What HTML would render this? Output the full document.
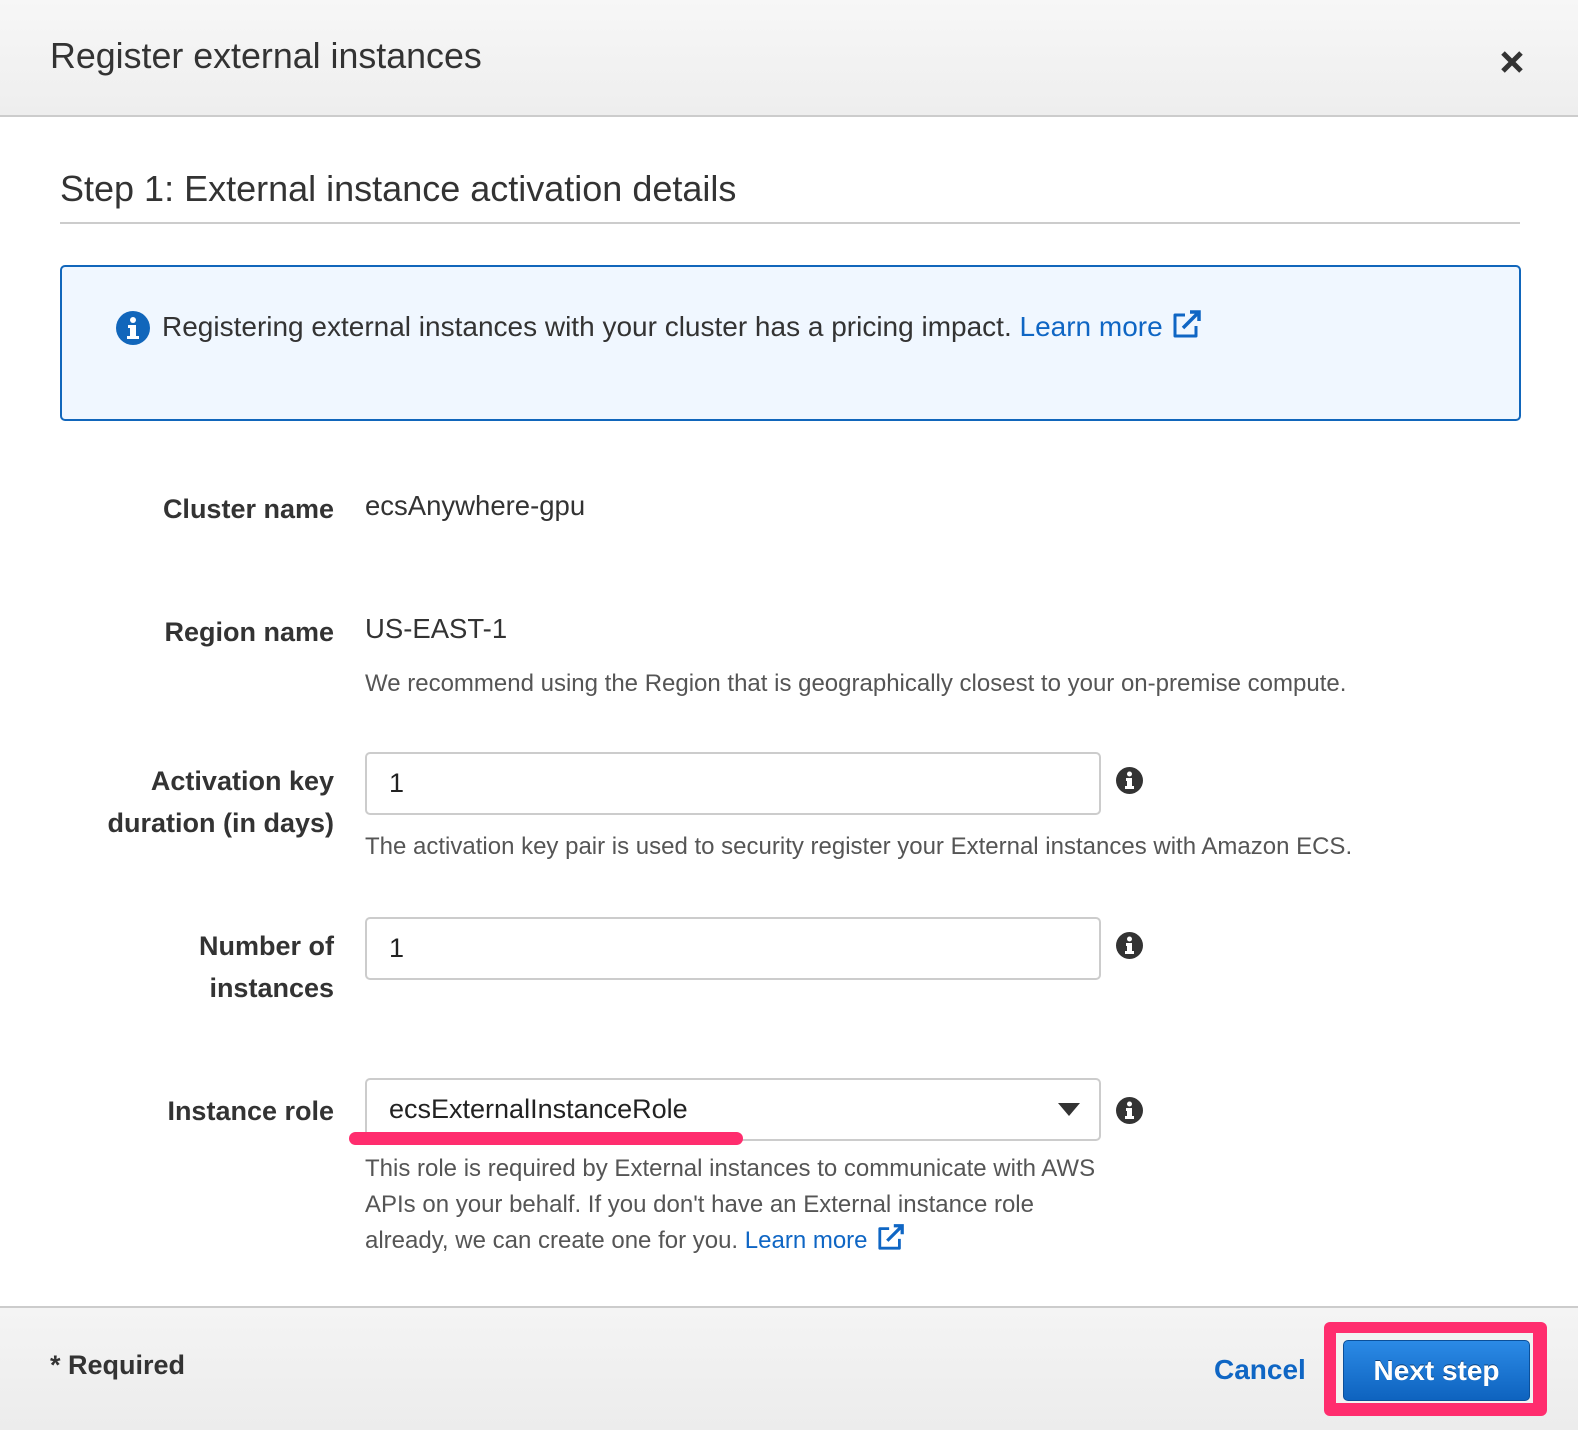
<!DOCTYPE html>
<html><head><meta charset="utf-8"><style>
*{margin:0;padding:0;box-sizing:border-box}
body{width:1578px;height:1430px;position:relative;background:#fff;font-family:"Liberation Sans",Arial,sans-serif;color:#333;overflow:hidden}
.a{position:absolute;white-space:nowrap}
.hdr{position:absolute;left:0;top:0;width:1578px;height:117px;background:linear-gradient(#f7f7f7,#eeeeee);border-bottom:2px solid #ccc}
.ftr{position:absolute;left:0;top:1306px;width:1578px;height:124px;background:linear-gradient(#f4f4f4,#ececec);border-top:2px solid #ccc}
.lbl{position:absolute;right:1244px;font-weight:bold;font-size:27px;text-align:right;line-height:42px;color:#333}
.inp{position:absolute;left:365px;width:736px;height:63px;border:2px solid #ccc;border-radius:5px;font-size:27px;padding-left:22px;line-height:59px;color:#222}
.help{position:absolute;left:365px;font-size:24px;color:#555;line-height:36px}
a{color:#0f66c4;text-decoration:none}
.ii{position:absolute;left:1116px;width:27px;height:27px}
.ext{display:inline-block;vertical-align:-3px;margin-left:8px}
</style></head><body>
<div class="hdr"></div>
<div class="a" style="left:50px;top:36px;font-size:35.8px;color:#333">Register external instances</div>
<svg class="a" style="left:1500px;top:50px" width="24" height="24" viewBox="0 0 24 24"><path d="M3 3L21 21M21 3L3 21" stroke="#333" stroke-width="5"/></svg>
<div class="a" style="left:60px;top:168px;font-size:36px;color:#333">Step 1: External instance activation details</div>
<div class="a" style="left:60px;top:222px;width:1460px;height:2px;background:#ccc"></div>
<div class="a" style="left:60px;top:265px;width:1461px;height:156px;background:#f0f7ff;border:2px solid #1166bb;border-radius:5px"></div>
<svg class="a" style="left:116px;top:311px" width="34" height="34" viewBox="0 0 34 34"><circle cx="17" cy="17" r="17" fill="#1166bb"/><circle cx="17" cy="9" r="3" fill="#fff"/><path d="M12 14h8v11h3v3H11v-3h3v-8h-2z" fill="#fff"/></svg>
<div class="a" style="left:162px;top:309px;font-size:28px;color:#333">Registering external instances with your cluster has a pricing impact. <a>Learn more</a><svg class="ext" width="32" height="30" viewBox="0 0 32 30"><path d="M14 6H4v21h21V17" fill="none" stroke="#0f66c4" stroke-width="3" stroke-linejoin="round"/><path d="M12 19L27 4M19 3h9v9" fill="none" stroke="#0f66c4" stroke-width="3.5"/></svg></div>

<div class="lbl" style="top:488px">Cluster name</div>
<div class="a" style="left:365px;top:490px;font-size:27.5px;color:#333">ecsAnywhere-gpu</div>
<div class="lbl" style="top:611px">Region name</div>
<div class="a" style="left:365px;top:613px;font-size:27.5px;color:#333">US-EAST-1</div>
<div class="help" style="top:666px">We recommend using the Region that is geographically closest to your on-premise compute.</div>

<div class="lbl" style="top:760px">Activation key<br>duration (in days)</div>
<div class="inp" style="top:752px">1</div>
<svg class="ii" style="top:767px" viewBox="0 0 27 27"><circle cx="13.5" cy="13.5" r="13.5" fill="#333"/><circle cx="13.5" cy="7" r="2.5" fill="#fff"/><path d="M10 11h6v8h2v3H9v-3h2v-5h-1z" fill="#fff"/></svg>
<div class="help" style="top:829px">The activation key pair is used to security register your External instances with Amazon ECS.</div>

<div class="lbl" style="top:925px">Number of<br>instances</div>
<div class="inp" style="top:917px">1</div>
<svg class="ii" style="top:932px" viewBox="0 0 27 27"><circle cx="13.5" cy="13.5" r="13.5" fill="#333"/><circle cx="13.5" cy="7" r="2.5" fill="#fff"/><path d="M10 11h6v8h2v3H9v-3h2v-5h-1z" fill="#fff"/></svg>

<div class="lbl" style="top:1090px">Instance role</div>
<div class="inp" style="top:1078px">ecsExternalInstanceRole</div>
<svg class="a" style="left:1058px;top:1103px" width="22" height="13" viewBox="0 0 22 13"><path d="M0 0h22L11 13z" fill="#333"/></svg>
<svg class="ii" style="top:1097px" viewBox="0 0 27 27"><circle cx="13.5" cy="13.5" r="13.5" fill="#333"/><circle cx="13.5" cy="7" r="2.5" fill="#fff"/><path d="M10 11h6v8h2v3H9v-3h2v-5h-1z" fill="#fff"/></svg>
<div class="a" style="left:349px;top:1132px;width:394px;height:13px;background:#ff2d6e;border-radius:7px"></div>
<div class="help" style="top:1151px;white-space:nowrap">This role is required by External instances to communicate with AWS<br>APIs on your behalf. If you don't have an External instance role<br>already, we can create one for you. <a>Learn more</a><svg class="ext" width="30" height="28" viewBox="0 0 32 30"><path d="M14 6H4v21h21V17" fill="none" stroke="#0f66c4" stroke-width="3" stroke-linejoin="round"/><path d="M12 19L27 4M19 3h9v9" fill="none" stroke="#0f66c4" stroke-width="3.5"/></svg></div>

<div class="ftr"></div>
<div class="a" style="left:50px;top:1350px;font-size:27px;font-weight:bold;color:#333">* Required</div>
<div class="a" style="left:1214px;top:1354px;font-size:28px;font-weight:bold;color:#0f66c4">Cancel</div>
<div class="a" style="left:1324px;top:1322px;width:223px;height:94px;background:#ff2d6e;border-radius:6px"></div>
<div class="a" style="left:1336px;top:1333px;width:197px;height:70px;background:#f2f2f2"></div>
<div class="a" style="left:1343px;top:1340px;width:187px;height:61px;background:linear-gradient(#2b8ae6,#0e63bf);border:1px solid #0b4f99;border-radius:5px;color:#fff;font-size:28px;font-weight:bold;text-align:center;line-height:59px;text-shadow:0 -1px 0 #0a3f7a">Next step</div>
</body></html>
